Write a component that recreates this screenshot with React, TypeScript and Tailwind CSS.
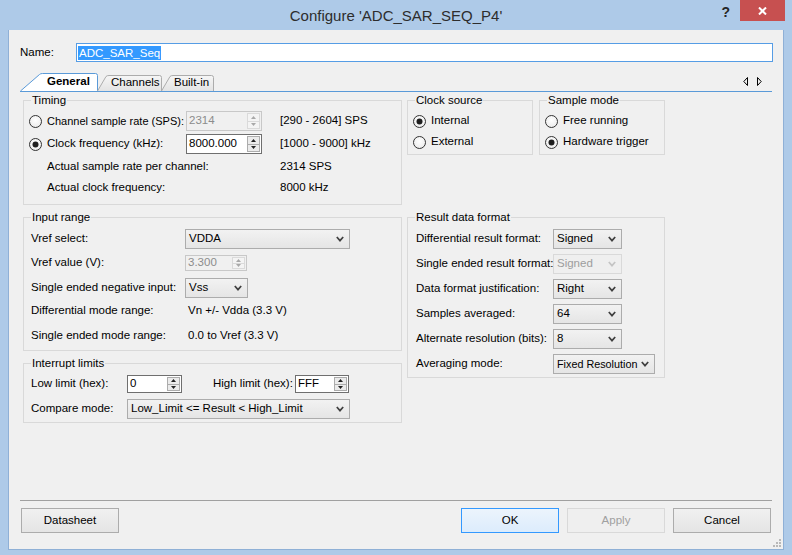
import React from "react";

function Radio({ checked }: { checked?: boolean }) {
  return (
    <svg width="13" height="13" viewBox="0 0 13 13" className="shrink-0">
      <defs>
        <radialGradient id="rg" cx="50%" cy="40%" r="60%">
          <stop offset="0%" stopColor="#ffffff" />
          <stop offset="100%" stopColor="#ececec" />
        </radialGradient>
      </defs>
      <circle cx="6.5" cy="6.5" r="6" fill="url(#rg)" stroke="#333333" strokeWidth="1" />
      {checked && <circle cx="6.5" cy="6.5" r="3" fill="#1e1e1e" />}
    </svg>
  );
}

function Chevron({ disabled }: { disabled?: boolean }) {
  return (
    <svg width="8" height="6" viewBox="0 0 8 6" className="shrink-0">
      <path d="M0.8 1 L4 4.6 L7.2 1" fill="none" stroke={disabled ? "#c4c4c4" : "#3f3f3f"} strokeWidth="1.7" />
    </svg>
  );
}

function Select({ value, className, disabled, small }: { value: string; className: string; disabled?: boolean; small?: boolean }) {
  return (
    <div
      className={`flex items-center h-[20px] pl-[3px] pr-[5px] border ${
        disabled
          ? "border-[#d9d9d9] bg-[#efefef] text-[#9d9d9d]"
          : "border-[#acacac] bg-gradient-to-b from-[#f2f2f2] to-[#e5e5e5] text-black"
      } ${className}`}
    >
      <span className={`flex-1 whitespace-nowrap ${small ? "text-[10.8px] mr-[2px]" : ""}`}>{value}</span>
      <Chevron disabled={disabled} />
    </div>
  );
}

function Tri({ up, disabled }: { up?: boolean; disabled?: boolean }) {
  return (
    <svg width="5" height="3" viewBox="0 0 5 3">
      <path d={up ? "M0 3 L2.5 0 L5 3 Z" : "M0 0 L5 0 L2.5 3 Z"} fill={disabled ? "#a8a8a8" : "#222222"} />
    </svg>
  );
}

function Spin({ value, className, disabled }: { value: string; className: string; disabled?: boolean }) {
  return (
    <div
      className={`flex border ${
        disabled ? "border-[#c8c8c8] bg-[#f0f0f0] text-[#8c8c8c]" : "border-[#6f6f6f] bg-white text-black"
      } ${className}`}
    >
      <span className="flex-1 flex items-center pl-[2px] whitespace-nowrap overflow-hidden">{value}</span>
      <div
        className={`w-[13px] my-[1px] mr-[1px] flex flex-col border ${
          disabled ? "border-[#dadada] bg-[#f4f4f4]" : "border-[#acacac] bg-[#ebebeb]"
        }`}
      >
        <div className={`flex-1 flex items-center justify-center border-b ${disabled ? "border-[#dadada]" : "border-[#acacac]"}`}>
          <Tri up disabled={disabled} />
        </div>
        <div className="flex-1 flex items-center justify-center">
          <Tri disabled={disabled} />
        </div>
      </div>
    </div>
  );
}

function Group({ title, className, children }: { title: string; className: string; children?: React.ReactNode }) {
  return (
    <div className={`relative border border-[#d9d9d9] ${className}`}>
      <span className="absolute -top-[8px] left-[7px] px-[1px] bg-[#f0f0f0] leading-[14px] whitespace-nowrap">{title}</span>
      {children}
    </div>
  );
}

function Button({ label, focused, disabled }: { label: string; focused?: boolean; disabled?: boolean }) {
  return (
    <div
      className={`w-[98px] h-[25px] flex items-center justify-center border ${
        focused
          ? "border-[#3399ff] bg-gradient-to-b from-[#ecf4fc] to-[#dcecfc]"
          : disabled
          ? "border-[#d9d9d9] bg-[#efefef] text-[#a0a0a0]"
          : "border-[#acacac] bg-gradient-to-b from-[#f0f0f0] to-[#e5e5e5]"
      }`}
    >
      {label}
    </div>
  );
}

export default function App() {
  return (
    <div className="w-[792px] h-[555px] bg-[#aecae8] flex flex-col font-['Liberation_Sans',Arial,sans-serif] text-[11.5px] text-black overflow-hidden">
      {/* title bar */}
      <div className="h-[30px] shrink-0 grid grid-cols-[1fr_auto_1fr]">
        <div />
        <div className="flex items-center pt-[3px] text-[15px] text-[#2d2d2d] whitespace-nowrap">Configure 'ADC_SAR_SEQ_P4'</div>
        <div className="flex justify-end items-start">
          <span className="mt-[3px] mr-[10px] text-[14px] font-bold text-[#262626] leading-[18px]">?</span>
          <div className="w-[45px] h-[21px] mr-[7px] bg-[#c75050] flex items-center justify-center">
            <svg width="9" height="8" viewBox="0 0 9 8">
              <path d="M1 0.5 L8 7.5 M8 0.5 L1 7.5" stroke="#ffffff" strokeWidth="2" />
            </svg>
          </div>
        </div>
      </div>

      {/* client area */}
      <div className="relative ml-[8px] w-[776px] h-[520px] shrink-0 bg-[#f0f0f0] border-x border-b border-[#8fb0d6] flex flex-col">
        {/* name */}
        <div className="mt-[13px] ml-[11px] flex items-center h-[19px]">
          <span className="w-[56px]">Name:</span>
          <div className="w-[697px] h-[19px] border border-[#569de5] bg-white flex items-center pl-[1px]">
            <span className="bg-[#3399ff] text-white leading-[14px] px-[1px]">ADC_SAR_Seq</span>
          </div>
        </div>

        {/* tabs */}
        <div className="mt-[11px] ml-[11px] w-[752px]">
          <div className="h-[18px] flex items-end">
            <div className="relative w-[78px] h-[18px] flex items-center pl-[27px] font-bold">
              <svg className="absolute inset-0" width="78" height="18" viewBox="0 0 78 18">
                <path d="M0.5 18 L19.5 1.5 Q20.5 0.5 22.5 0.5 L75.5 0.5 Q77.5 0.5 77.5 2.5 L77.5 18 Z" fill="#ffffff" />
                <path d="M0.5 18 L19.5 1.5 Q20.5 0.5 22.5 0.5 L75.5 0.5 Q77.5 0.5 77.5 2.5 L77.5 18" fill="none" stroke="#5a9ad8" />
              </svg>
              <span className="relative">General</span>
            </div>
            <div className="relative -ml-[1px] w-[65px] h-[16px] flex items-center pl-[14px]">
              <svg className="absolute inset-0" width="65" height="16" viewBox="0 0 65 16">
                <defs>
                  <linearGradient id="tg" x1="0" y1="0" x2="0" y2="1">
                    <stop offset="0%" stopColor="#f6f6f6" />
                    <stop offset="100%" stopColor="#e3e3e3" />
                  </linearGradient>
                </defs>
                <path d="M0.5 16 L9 1.5 Q10 0.5 12 0.5 L62.5 0.5 Q64.5 0.5 64.5 2.5 L64.5 16" fill="url(#tg)" stroke="#acacac" />
              </svg>
              <span className="relative">Channels</span>
            </div>
            <div className="relative -ml-[1px] w-[53px] h-[16px] flex items-center pl-[13px]">
              <svg className="absolute inset-0" width="53" height="16" viewBox="0 0 53 16">
                <path d="M0.5 16 L9 1.5 Q10 0.5 12 0.5 L50.5 0.5 Q52.5 0.5 52.5 2.5 L52.5 16" fill="url(#tg)" stroke="#acacac" />
              </svg>
              <span className="relative">Built-in</span>
            </div>
            <div className="ml-auto mr-[10px] mb-[5px] flex items-center gap-[9px]">
              <svg width="5" height="9" viewBox="0 0 5 9">
                <path d="M4.5 0.5 L0.8 4.5 L4.5 8.5 Z" fill="none" stroke="#000" strokeWidth="1" />
              </svg>
              <svg width="5" height="9" viewBox="0 0 5 9">
                <path d="M0.5 0.5 L4.2 4.5 L0.5 8.5 Z" fill="none" stroke="#000" strokeWidth="1" />
              </svg>
            </div>
          </div>
          <div className="h-px bg-[#5a9ad8]" />
        </div>

        {/* panel */}
        <div className="mt-[8px] ml-[14px] flex">
          <div className="w-[379px] flex flex-col">
            <Group title="Timing" className="h-[105px] pt-[10px]">
              <div className="flex items-center h-[20px] pl-[5px]">
                <Radio />
                <span className="ml-[5px] w-[139px] whitespace-nowrap text-[11px]">Channel sample rate (SPS):</span>
                <Spin value="2314" disabled className="w-[76px] h-[20px]" />
                <span className="ml-[18px]">[290 - 2604] SPS</span>
              </div>
              <div className="mt-[3px] flex items-center h-[20px] pl-[5px]">
                <Radio checked />
                <span className="ml-[5px] w-[139px] whitespace-nowrap">Clock frequency (kHz):</span>
                <Spin value="8000.000" className="w-[76px] h-[20px]" />
                <span className="ml-[18px]">[1000 - 9000] kHz</span>
              </div>
              <div className="mt-[3px] flex items-center h-[20px] pl-[23px]">
                <span className="w-[233px]">Actual sample rate per channel:</span>
                <span>2314 SPS</span>
              </div>
              <div className="mt-[1px] flex items-center h-[20px] pl-[23px]">
                <span className="w-[233px]">Actual clock frequency:</span>
                <span>8000 kHz</span>
              </div>
            </Group>

            <Group title="Input range" className="mt-[12px] h-[134px] pt-[11px] pl-[7px]">
              <div className="flex items-center h-[20px]">
                <span className="w-[154px]">Vref select:</span>
                <Select value="VDDA" className="w-[165px]" />
              </div>
              <div className="mt-[4px] flex items-center h-[20px]">
                <span className="w-[154px]">Vref value (V):</span>
                <Spin value="3.300" disabled className="w-[62px] h-[16px]" />
              </div>
              <div className="mt-[5px] flex items-center h-[20px]">
                <span className="w-[154px] whitespace-nowrap">Single ended negative input:</span>
                <Select value="Vss" className="w-[63px]" />
              </div>
              <div className="mt-[3px] flex items-center h-[20px]">
                <span className="w-[157px]">Differential mode range:</span>
                <span>Vn +/- Vdda (3.3 V)</span>
              </div>
              <div className="mt-[5px] flex items-center h-[20px]">
                <span className="w-[157px]">Single ended mode range:</span>
                <span>0.0 to Vref (3.3 V)</span>
              </div>
            </Group>

            <Group title="Interrupt limits" className="mt-[12px] h-[60px] pt-[10px] pl-[7px]">
              <div className="flex items-center h-[20px]">
                <span className="w-[96px]">Low limit (hex):</span>
                <Spin value="0" className="w-[55px] h-[18px]" />
                <span className="ml-[31px] w-[82px] whitespace-nowrap">High limit (hex):</span>
                <Spin value="FFF" className="w-[54px] h-[18px]" />
              </div>
              <div className="mt-[5px] flex items-center h-[20px]">
                <span className="w-[96px]">Compare mode:</span>
                <Select value="Low_Limit <= Result < High_Limit" className="w-[223px]" />
              </div>
            </Group>
          </div>

          <div className="ml-[5px] flex flex-col">
            <div className="flex">
              <Group title="Clock source" className="w-[126px] h-[55px] pt-[10px] pl-[5px]">
                <div className="flex items-center h-[20px]">
                  <Radio checked />
                  <span className="ml-[5px]">Internal</span>
                </div>
                <div className="mt-[1px] flex items-center h-[20px]">
                  <Radio />
                  <span className="ml-[5px]">External</span>
                </div>
              </Group>
              <Group title="Sample mode" className="ml-[6px] w-[126px] h-[55px] pt-[10px] pl-[5px]">
                <div className="flex items-center h-[20px]">
                  <Radio />
                  <span className="ml-[5px]">Free running</span>
                </div>
                <div className="mt-[1px] flex items-center h-[20px]">
                  <Radio checked />
                  <span className="ml-[5px]">Hardware trigger</span>
                </div>
              </Group>
            </div>

            <Group title="Result data format" className="mt-[62px] w-[258px] h-[161px] pt-[11px] pl-[8px] flex flex-col gap-[5px]">
              <div className="flex items-center h-[20px]">
                <span className="w-[137px] whitespace-nowrap">Differential result format:</span>
                <Select value="Signed" className="w-[69px]" />
              </div>
              <div className="flex items-center h-[20px]">
                <span className="w-[137px] whitespace-nowrap">Single ended result format:</span>
                <Select value="Signed" disabled className="w-[69px]" />
              </div>
              <div className="flex items-center h-[20px]">
                <span className="w-[137px] whitespace-nowrap">Data format justification:</span>
                <Select value="Right" className="w-[69px]" />
              </div>
              <div className="flex items-center h-[20px]">
                <span className="w-[137px] whitespace-nowrap">Samples averaged:</span>
                <Select value="64" className="w-[69px]" />
              </div>
              <div className="flex items-center h-[20px]">
                <span className="w-[137px] whitespace-nowrap">Alternate resolution (bits):</span>
                <Select value="8" className="w-[69px]" />
              </div>
              <div className="flex items-center h-[20px]">
                <span className="w-[137px] whitespace-nowrap">Averaging mode:</span>
                <Select value="Fixed Resolution" small className="w-[102px]" />
              </div>
            </Group>
          </div>
        </div>

        <div className="flex-1" />

        {/* footer */}
        <div className="ml-[11px] w-[752px] h-px bg-[#a0a0a0]" />
        <div className="mt-[7px] mb-[16px] mx-[12px] h-[25px] flex">
          <Button label="Datasheet" />
          <div className="flex-1" />
          <Button label="OK" focused />
          <div className="w-[8px]" />
          <Button label="Apply" disabled />
          <div className="w-[8px]" />
          <Button label="Cancel" />
        </div>

        <svg className="absolute bottom-[2px] right-[2px]" width="9" height="9" viewBox="0 0 9 9">
          <rect x="7" y="1" width="2" height="2" fill="#b8b8b8" />
          <rect x="4" y="4" width="2" height="2" fill="#b8b8b8" />
          <rect x="7" y="4" width="2" height="2" fill="#b8b8b8" />
          <rect x="1" y="7" width="2" height="2" fill="#b8b8b8" />
          <rect x="4" y="7" width="2" height="2" fill="#b8b8b8" />
          <rect x="7" y="7" width="2" height="2" fill="#b8b8b8" />
        </svg>
      </div>
    </div>
  );
}
